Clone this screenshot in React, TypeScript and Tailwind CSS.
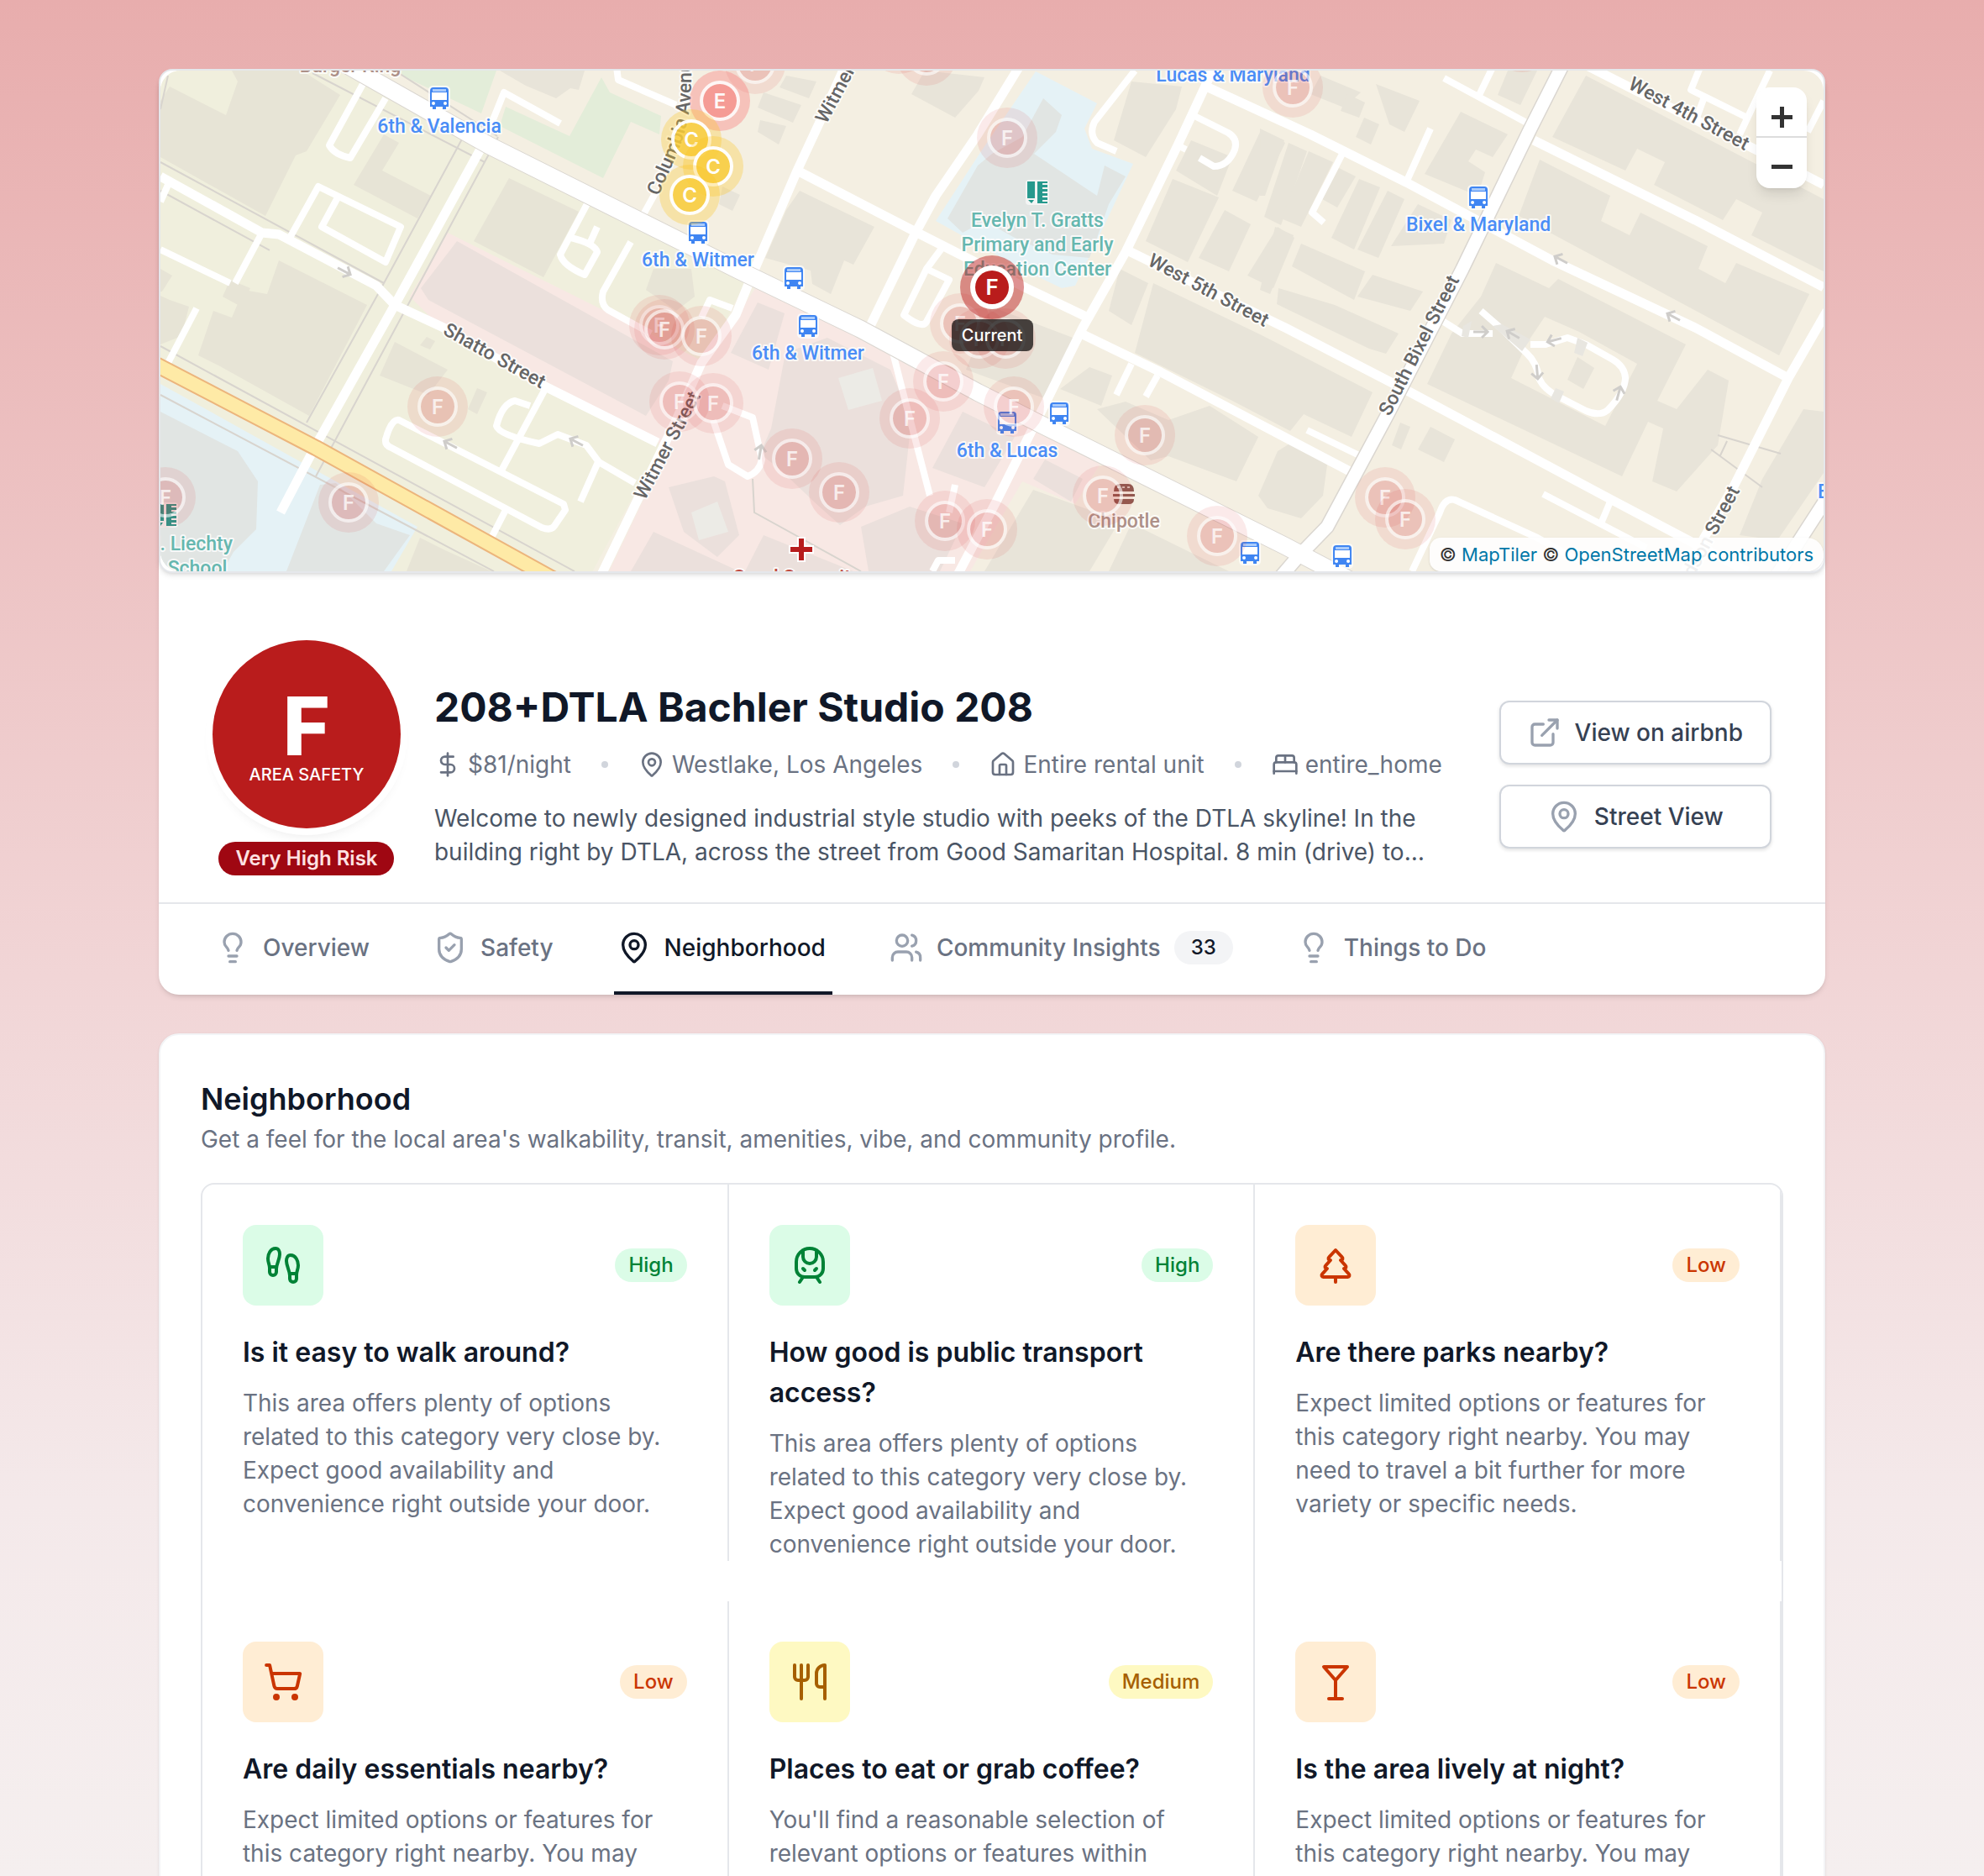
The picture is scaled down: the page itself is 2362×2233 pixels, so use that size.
import React from "react";
import {
  BedDouble,
  DollarSign,
  ExternalLink,
  Footprints,
  House,
  Lightbulb,
  MapPin,
  Martini,
  ShieldCheck,
  ShoppingCart,
  TrainFront,
  TreePine,
  Users,
  Utensils,
  type LucideIcon,
} from "lucide-react";
import clsx from "clsx";

/* ---------- map data (map units) ---------- */

const leftBuildings = [
  "191,120 202,103 269,137 283,97 276,84 359,84 405,113 365,180 352,185 316,257 191,187",
  "457,160 475,170 455,203 513,233 497,260 421,220",
  "606,212 689,252 647,330 564,287",
  "332,310 437,363 368,495 262,436 236,423 254,370 276,378 290,345 318,350",
  "274,333 298,343 287,365 265,353",
  "191,352 202,357 225,365 216,400 191,410",
  "191,320 205,328 193,347 191,347",
  "470,407 533,440 510,470 452,447",
  "568,462 580,467 568,493 557,487",
  "508,401 518,406 512,416 500,411",
  "500,640 530,655 585,680 484,680",
  "778,320 823,320 827,353 805,370 769,345",
];

const buildings = [
  "595,84 696,84 689,107 679,105 662,117 626,102",
  "936,90 972,97 963,117 928,104",
  "909,110 954,125 944,146 902,128",
  "905,143 936,150 927,172 902,157",
  "860,222 881,232 872,251 856,243",
  "952,227 1041,270 1016,315 1005,310 989,350 967,338 965,322 911,307 936,250",
  "1101,84 1172,92 1165,108 1137,140 1085,112",
  "1347,97 1407,103 1400,130 1364,187 1326,167",
  "1418,167 1467,187 1449,233 1400,203",
  "1396,213 1451,235 1414,312 1364,287",
  "1501,155 1530,170 1496,240 1467,227",
  "1534,170 1556,180 1525,268 1505,258",
  "1458,250 1489,267 1463,323 1427,307",
  "1521,270 1541,283 1516,343 1485,328",
  "1333,320 1367,337 1347,387 1320,370",
  "1373,337 1500,398 1634,467 1609,520 1552,493 1536,513 1467,477 1351,420",
  "1180,365 1285,405 1243,474 1150,440",
  "1297,437 1324,447 1311,483 1262,463",
  "1306,487 1340,478 1391,500 1440,483 1498,520 1472,573 1391,543 1370,548",
  "1521,537 1540,525 1580,553 1575,590 1549,617 1509,605 1498,590",
  "1230,583 1333,620 1297,680 1172,680",
  "1347,623 1463,680 1320,680",
  "1888,90 2171,237 2171,323 2085,280 2098,253 2067,237 2051,262 1969,220 1982,193 1949,177 1935,203 1848,163",
  "1833,190 1917,233 1906,263 1940,280 1953,253 2033,293 2022,320 2054,337 2067,313 2154,350 2118,423 1808,257",
  "1739,133 1795,160 1777,187 1757,178 1748,192 1768,205 1759,233 1696,207",
  "1795,84 1830,84 1810,125 1783,113",
  "1594,200 1614,210 1592,247 1574,237",
  "1618,213 1643,223 1612,297 1585,283",
  "1652,227 1672,237 1641,307 1616,297",
  "1558,180 1587,193 1549,270 1525,260",
  "1500,153 1529,167 1506,233 1500,233",
  "1688,243 1728,262 1719,290 1656,293",
  "1549,290 1625,323 1612,357 1538,317",
  "1634,327 1694,347 1679,370 1616,353",
  "1522,343 1589,363 1665,397 1650,421 1630,415 1520,362",
  "1518,270 1540,280 1512,350 1500,345",
  "1572,90 1620,110 1600,128 1560,112",
  "1638,100 1690,120 1672,157 1654,148",
  "1604,112 1625,122 1618,140 1596,132",
  "1624,140 1642,148 1632,172 1614,163",
  "1667,503 1679,508 1668,535 1657,530",
  "1703,508 1732,523 1719,550 1688,535",
  "1781,313 1844,343 1855,332 2007,410 1973,477 1996,487 2033,440 2058,453 2045,530 1996,585 1967,573 1980,510 1962,502 1931,567 1699,457 1728,397 1763,353",
  "2147,487 2171,490 2171,563 2116,643 2071,637 2098,570 2120,533",
];

const hospitalBuildings = [
  "544,287 801,430 796,453 769,495 510,357 501,343",
  "902,360 934,373 915,440 870,420",
  "935,420 985,402 1060,440 1085,500 1075,590 1030,603 1000,625 972,600 930,560 905,540 918,510",
  "1146,490 1208,520 1172,580 1110,557",
  "1025,627 1083,603 1146,623 1119,680 1034,680",
  "909,637 1016,680 887,680",
  "796,580 850,567 863,573 880,637 854,663 814,633",
  "778,633 880,680 751,680",
  "1244,547 1289,570 1275,597 1230,570",
];

const thinRoads = [
  "M200 220L191 240",
  "M312 277L280 337M191 297L274 337",
  "M234 367L200 432",
  "M432 100L392 173Q398 184 417 188L459 117",
  "M345 283L379 222L477 270L459 312L383 270L401 237",
  "M575 172L600 110L667 147",
  "M734 80L736 95L805 125",
  "M765 257L780 230",
  "M702 237L667 303Q670 316 696 327L711 300Q708 290 680 283M711 270L702 290",
  "M751 288L718 347Q714 362 724 369L775 397",
  "M872 367L845 357L835 378",
  "M649 463L597 560M631 483L613 477Q598 480 591 507Q594 518 642 528L664 517L698 530L713 550L756 575M712 550L691 597",
  "M671 600L475 500Q466 498 459 523Q458 530 466 533L645 628Q656 632 660 626L673 607ZM602 607L584 642",
  "M1351 84L1303 145Q1296 160 1306 170L1329 180",
  "M1420 137L1462 158Q1474 165 1470 178Q1462 198 1445 198L1428 188",
  "M1402 173L1412 178",
  "M1598 183L1562 253L1576 265",
  "M1674 217L1703 153",
  "M1719 93L1821 148M1761 113L1777 80",
  "M2024 80L2013 107L2080 140M2107 84L2071 160M2171 120L2152 157M2028 118L2020 140",
  "M1837 588L1960 652M1917 597L1906 623",
  "M1681 680L1714 610Q1720 592 1732 595L1830 640L1902 680",
  "M1556 512L1618 542",
  "M1714 380L1741 397L1777 397",
  "M1763 370L1786 390L1817 420Q1830 432 1832 450Q1838 464 1857 473L1888 489Q1904 496 1914 488Q1934 468 1935 450Q1934 436 1920 428L1888 410L1866 402L1840 410H1822",
  "M1123 293L1103 320L1130 333L1103 383Q1098 392 1076 375L1103 320",
  "M1063 420L1074 463L1107 590M1137 577L1130 610",
  "M1110 680L1117 667H1137",
  "M849 500L867 553L890 567Q904 562 907 547L896 497L860 483",
  "M1329 470L1347 433M1364 472L1378 447",
];

const streets = [
  "M191 210L312 277L332 279L448 340L470 363L528 390L649 460L783 527",
  "M575 172L470 363L376 530L334 610",
  "M713 690L805 500L835 432L876 375L893 333L949 203L976 145L1010 70",
  "M949 203L1092 277L1222 343L1293 377",
  "M1342 298L1530 390L1679 467L1915 593L2080 680",
  "M1289 398L1382 443L1500 505L1609 562",
  "M1213 80L1164 160L1114 233L1090 277L1034 392",
  "M1450 70L1402 173L1340 300L1289 390L1248 473L1186 597L1137 690",
  "M1436 103L1560 160L1674 217L1848 310L2018 390L2129 450",
  "M1826 167L2018 262L2171 342",
  "M1885 76L1946 107L2094 180L2171 220",
  "M2175 370L2129 450L2065 577L2000 690",
];

const boundaries = [
  "M372 87L577 193M553 160L450 350L365 503M593 163L376 567",
  "M191 193L457 337M191 227L321 298",
  "M191 412L684 680M191 470L588 680",
  "M896 570L898 610L1025 680M470 84L592 162",
  "M2045 518L2120 540M2037 535L2098 580M2056 525L2048 542",
  "M191 130L200 90",
];

const arrows: [number, number, number][] = [
  [410, 323, 28],
  [536, 529, 208],
  [686, 526, 208],
  [905, 538, -80],
  [1858, 309, 208],
  [1992, 377, 208],
  [1763, 395, 0],
  [1801, 398, 210],
  [1850, 405, 165],
  [1830, 443, 85],
  [1927, 468, -75],
];

const buses: [number, number][] = [
  [523, 117],
  [831, 277],
  [945, 331],
  [962, 388],
  [1199, 503],
  [1261, 492],
  [1488, 658],
  [1760, 235],
  [1598, 662],
];

const stops: [number, number, string][] = [
  [523, 158, "6th & Valencia"],
  [831, 317, "6th & Witmer"],
  [962, 428, "6th & Witmer"],
  [1199, 544, "6th & Lucas"],
  [1468, 97, "Lucas & Maryland"],
  [1760, 275, "Bixel & Maryland"],
];

const streetNames: [number, number, number, string][] = [
  [589, 423, 29, "Shatto Street"],
  [1439, 345, 28, "West 5th Street"],
  [2011, 135, 28, "West 4th Street"],
  [1689, 411, -63, "South Bixel Street"],
  [794, 530, -62, "Witmer Street"],
  [1010, 82, -62, "Witmer Street"],
  [2030, 645, -62, "Hudson Street"],
];

const fMarkers: [number, number][] = [
  [899, 76],
  [1103, 66],
  [1070, 52],
  [1199, 164],
  [1539, 104],
  [1812, 50],
  [785, 387],
  [791, 392],
  [835, 400],
  [809, 478],
  [849, 480],
  [521, 484],
  [415, 598],
  [197, 592],
  [1143, 385],
  [1166, 403],
  [1197, 403],
  [1123, 454],
  [1083, 498],
  [1207, 484],
  [943, 546],
  [999, 586],
  [1125, 620],
  [1175, 630],
  [1363, 518],
  [1313, 590],
  [1449, 638],
  [1649, 592],
  [1673, 618],
];

const cMarkers: [number, number][] = [
  [823, 166],
  [849, 198],
  [821, 232],
];

/* ---------- map drawing ---------- */

const BusIcon = ({ x, y }: { x: number; y: number }) => (
  <g transform={`translate(${x} ${y})`}>
    <rect x="-13" y="-15" width="26" height="30" rx="5" fill="#fff" opacity="0.7" />
    <path d="M-11 -9Q-11 -13 -7 -13H7Q11 -13 11 -9V10H8V13H4V10H-4V13H-8V10H-11Z" fill="#3f85f2" />
    <rect x="-9" y="-7" width="18" height="9" fill="#fff" />
    <rect x="-8" y="-11" width="16" height="3" fill="#a9cbfb" />
    <circle cx="-7" cy="6" r="2" fill="#fff" />
    <circle cx="7" cy="6" r="2" fill="#fff" />
  </g>
);

const SchoolIcon = ({ x, y }: { x: number; y: number }) => (
  <g transform={`translate(${x} ${y})`} fill="#26998d">
    <rect x="-14" y="-15" width="28" height="30" rx="4" fill="#fff" opacity="0.6" />
    <path d="M-12 -13H-3V7H-12ZM-11 9H-4L-7 13Z" />
    <path d="M0 -13H12V-11H6V-9H12V-6H6V-4H12V-1H6V1H12V4H6V6H12V9H6V11H12V13H0Z" />
  </g>
);

const FMarker = ({ x, y }: { x: number; y: number }) => (
  <g transform={`translate(${x} ${y})`}>
    <circle r="36" fill="#dc3c3c" opacity="0.11" />
    <circle r="20" fill="#c81e1e" opacity="0.13" />
    <circle r="22" fill="none" stroke="#fff" strokeWidth="4" opacity="0.6" />
    <text y="9" textAnchor="middle" className="fill-white text-[24px] font-semibold" opacity="0.75">
      F
    </text>
  </g>
);

const NeighborhoodMap: React.FC = () => (
  <svg
    viewBox="191 84 1980 596"
    preserveAspectRatio="xMidYMid slice"
    className="block h-full w-full rounded-3xl font-[Inter,sans-serif]"
    role="img"
    aria-label="Map of listings near the current one"
  >
    <rect x="191" y="84" width="1980" height="596" fill="#f4efe2" />
    <path d="M191 84H400L582 173L890 330L835 440L700 690H191Z" fill="#f0efdd" />
    <path d="M466 84H591L573 135ZM716 92L726 110L787 138L785 160L751 145L718 212L595 150L602 127L678 162Z" fill="#e3edd9" />
    <path d="M533 277L488 353L520 385L783 525L790 545L725 680H1155L1217 573L1280 600L1310 552L1239 510L1025 400L900 342L840 432L760 390Z" fill="#f8e8e4" />
    <path d="M1233 85L1306 123L1291 153L1300 177L1349 195L1320 257L1280 340L1264 343L1222 323L1114 263L1168 180Z" fill="#e5f2f6" />
    <path d="M191 457L497 627L466 680H191Z" fill="#e5f2f6" />
    <path
      d="M1242 117L1264 137L1257 157L1231 183L1306 233L1315 197L1340 210L1320 243L1306 283L1297 307L1253 303L1208 283L1172 263L1146 277L1128 260L1164 197L1181 183L1217 163ZM191 490L283 537L307 573L305 630L278 657L265 680H191ZM381 577L400 575L448 623L488 637L457 680H341Z"
      fill="#e1e5e3"
    />
    <g fill="#e7e4d6">
      {leftBuildings.map((points) => (
        <polygon key={points} points={points} />
      ))}
    </g>
    <g fill="#e8e4d9">
      {buildings.map((points) => (
        <polygon key={points} points={points} />
      ))}
    </g>
    <g fill="#ebe0dc">
      {hospitalBuildings.map((points) => (
        <polygon key={points} points={points} />
      ))}
    </g>
    <polygon points="1839,377 1880,395 1949,433 1911,507 1799,450 1818,408" fill="#f4efe2" />
    <polygon points="1878,425 1898,438 1885,463 1866,452" fill="#e8e4d9" />
    <path d="M998 450L1039 438L1050 477L1010 488ZM823 610L854 597L867 633L832 643Z" fill="#ecebe6" />

    <g fill="none" stroke="#d8d4ce" strokeWidth="2">
      {boundaries.map((d) => (
        <path key={d} d={d} />
      ))}
    </g>

    <g fill="none" stroke="#fff" strokeLinejoin="round">
      <g strokeWidth="8">
        {thinRoads.map((d) => (
          <path key={d} d={d} />
        ))}
      </g>
      <g strokeWidth="11">
        {streets.map((d) => (
          <path key={d} d={d} />
        ))}
      </g>
      <g stroke="#dad6d0">
        <path d="M400 70L582 173L880 322L1025 392L1164 467L1239 505L1530 650L1610 692" strokeWidth="22" />
        <path d="M1864 70L1821 155L1741 320L1652 493L1580 627L1545 663L1520 692M2180 585L2112 690" strokeWidth="18" />
      </g>
      <path d="M400 70L582 173L880 322L1025 392L1164 467L1239 505L1530 650L1610 692" strokeWidth="20" />
      <path d="M1864 70L1821 155L1741 320L1652 493L1580 627L1545 663L1520 692M2180 585L2112 690" strokeWidth="15" />
      <path d="M180 431L376 533L660 690" stroke="#ecb57c" strokeWidth="20" />
      <path d="M180 431L376 533L660 690" stroke="#feeaa6" strokeWidth="16" />
    </g>
    <path d="M1777 388L1788 386L1822 404L1812 418ZM1742 388L1752 382L1748 402L1740 400ZM1878 402L1890 408L1884 424L1874 420ZM1852 462L1862 466L1856 480L1846 474Z" fill="#e8e6e0" />

    <g fill="none" stroke="#cfcdca" strokeWidth="3">
      {arrows.map(([x, y, angle]) => (
        <path key={`${x}-${y}`} d="M-9 0H8M1 -7L8 0L1 7" transform={`translate(${x} ${y}) rotate(${angle})`} />
      ))}
    </g>

    <g
      className="font-[Roboto,sans-serif] text-[23px] font-medium"
      stroke="#fff"
      strokeOpacity="0.75"
      strokeWidth="4"
      strokeLinejoin="round"
      paintOrder="stroke"
      textAnchor="middle"
    >
      <g fill="#666">
        {streetNames.map(([x, y, angle, name]) => (
          <text key={`${name}-${x}`} transform={`translate(${x} ${y}) rotate(${angle})`} y="8">
            {name}
          </text>
        ))}
        <path id="columbia" d="M784 234C797 202 811 177 817 150S824 110 823 30" fill="none" stroke="none" />
        <text textAnchor="start">
          <textPath href="#columbia">Columbia Avenue</textPath>
        </text>
      </g>
      <g fill="#4a8df6">
        {stops.map(([x, y, name]) => (
          <text key={`${name}-${x}`} x={x} y={y}>
            {name}
          </text>
        ))}
        <text x="2164" y="593" textAnchor="start">
          Beaudry
        </text>
      </g>
      <g fill="#66b7af">
        <text x="1235" y="270">Evelyn T. Gratts</text>
        <text x="1235" y="299">Primary and Early</text>
        <text x="1235" y="328">Education Center</text>
        <text x="277" y="655" textAnchor="end">H. Liechty</text>
        <text x="235" y="684">School</text>
      </g>
      <g fill="#ad9088">
        <text x="1338" y="628">Chipotle</text>
        <text x="417" y="86">Burger King</text>
      </g>
      <text x="955" y="695" fill="#c04a40">Good Samaritan</text>
    </g>

    {buses.map(([x, y]) => (
      <BusIcon key={`${x}-${y}`} x={x} y={y} />
    ))}
    <SchoolIcon x={1235} y={229} />
    <SchoolIcon x={198} y={613} />
    <path d="M951 641H957V651H967V657H957V667H951V657H941V651H951Z" fill="#b71c1c" stroke="#fff" strokeWidth="4" paintOrder="stroke" />
    <g fill="#8d5a50">
      <path d="M1326 585Q1326 576 1333 576H1343Q1350 576 1350 585ZM1325 588H1351V591H1325ZM1326 594H1350Q1350 600 1344 600H1332Q1326 600 1326 594Z" />
      <path d="M1330 580H1346" stroke="#d9c0b8" strokeWidth="2" strokeDasharray="3 3" />
    </g>

    {fMarkers.map(([x, y]) => (
      <FMarker key={`${x}-${y}`} x={x} y={y} />
    ))}
    <g transform="translate(857 120)">
      <circle r="36" fill="#f87171" opacity="0.35" />
      <circle r="20" fill="#f47c76" opacity="0.55" />
      <circle r="22" fill="none" stroke="#fff" strokeWidth="4" opacity="0.85" />
      <text y="9" textAnchor="middle" className="fill-white text-[24px] font-semibold" opacity="0.95">
        E
      </text>
    </g>
    {cMarkers.map(([x, y]) => (
      <g key={`${x}-${y}`} transform={`translate(${x} ${y})`}>
        <circle r="36" fill="#fbc21e" opacity="0.3" />
        <circle r="20" fill="#f9cc38" opacity="0.8" />
        <circle r="22" fill="none" stroke="#fff" strokeWidth="4" opacity="0.95" />
        <text y="9" textAnchor="middle" className="fill-white text-[24px] font-semibold">
          C
        </text>
      </g>
    ))}

    <g transform="translate(1181 342)">
      <circle r="38" fill="#b91c1c" opacity="0.48" />
      <circle r="26" fill="#fff" />
      <circle r="20" fill="#b91c1c" />
      <text y="9" textAnchor="middle" className="fill-white text-[26px] font-semibold">
        F
      </text>
      <rect x="-48" y="38" width="97" height="38" rx="8" fill="#000" opacity="0.7" />
      <text y="64" textAnchor="middle" className="fill-white text-[20px] font-medium">
        Current
      </text>
    </g>
  </svg>
);

const MapPanel: React.FC = () => (
  <div className="relative h-[600px] overflow-hidden rounded-2xl border-2 border-gray-200 bg-white shadow-md">
    <NeighborhoodMap />
    <div className="absolute top-5 right-5 flex w-[60px] flex-col overflow-hidden rounded-2xl bg-white shadow-lg">
      <button type="button" aria-label="Zoom in" className="flex h-[60px] items-center justify-center border-b-2 border-[#dddddd] pt-3">
        <svg viewBox="0 0 25 25" className="size-[25px]" fill="#333">
          <path d="M10 0H15V10H25V15H15V25H10V15H0V10H10Z" />
        </svg>
      </button>
      <button type="button" aria-label="Zoom out" className="flex h-[60px] items-center justify-center pt-2">
        <svg viewBox="0 0 25 25" className="size-[25px]" fill="#333">
          <path d="M0 10H25V15H0Z" />
        </svg>
      </button>
    </div>
    <div className="absolute right-0 bottom-0 rounded-l-2xl rounded-r-3xl bg-white/90 px-3 py-1 text-[22px] leading-8 text-[#333] shadow-sm">
      ©{" "}
      <a href="#maptiler" className="text-[#0078a8]">
        MapTiler
      </a>{" "}
      ©{" "}
      <a href="#osm" className="text-[#0078a8]">
        OpenStreetMap contributors
      </a>
    </div>
  </div>
);

/* ---------- listing header ---------- */

const meta: { icon: LucideIcon; label: string }[] = [
  { icon: DollarSign, label: "$81/night" },
  { icon: MapPin, label: "Westlake, Los Angeles" },
  { icon: House, label: "Entire rental unit" },
  { icon: BedDouble, label: "entire_home" },
];

const actionClass =
  "flex items-center justify-center gap-4 rounded-xl border-2 border-gray-300 bg-white px-8 py-4 text-[28px] leading-10 font-medium text-gray-700 shadow-[0_2px_4px_rgba(0,0,0,0.12)]";

const ListingHeader: React.FC = () => (
  <div className="flex gap-10 px-16 pt-20 pb-8">
    <div className="flex shrink-0 flex-col items-center gap-4">
      <div className="flex size-56 flex-col items-center justify-center rounded-full bg-[#b91c1c] text-white shadow-lg ring-8 ring-white">
        <span className="text-8xl leading-none font-extrabold">F</span>
        <span className="text-[20px] leading-5 font-medium">AREA SAFETY</span>
      </div>
      <span className="rounded-full bg-[#9f0712] px-5 py-1 text-2xl font-semibold text-[#ffe2e2]">
        Very High Risk
      </span>
    </div>

    <div className="flex min-w-0 flex-1 flex-col justify-center pt-10">
      <h1 className="text-5xl leading-16 font-bold text-gray-900">208+DTLA Bachler Studio 208</h1>
      <ul className="mt-4 flex items-center text-[28px] leading-10 text-gray-500">
        {meta.map(({ icon: Icon, label }, index) => (
          <li key={label} className="flex items-center">
            {index > 0 && <span className="mx-9 size-2 rounded-full bg-gray-300" />}
            <Icon size={32} className="mr-2" />
            {label}
          </li>
        ))}
      </ul>
      <p className="mt-6 line-clamp-2 max-w-[1200px] text-[28px] leading-10 text-gray-600">
        Welcome to newly designed industrial style studio with peeks of the DTLA skyline! In the
        building right by DTLA, across the street from Good Samaritan Hospital. 8 min (drive) to
        Crypto.com Arena and the LA Convention Center.
      </p>
    </div>

    <div className="flex shrink-0 flex-col justify-center gap-6 pt-10">
      <a href="#airbnb" className={actionClass}>
        <ExternalLink size={40} className="text-gray-400" />
        View on airbnb
      </a>
      <button type="button" className={actionClass}>
        <MapPin size={40} className="text-gray-400" />
        Street View
      </button>
    </div>
  </div>
);

const tabs: { icon: LucideIcon; label: string; count?: number; active?: boolean }[] = [
  { icon: Lightbulb, label: "Overview" },
  { icon: ShieldCheck, label: "Safety" },
  { icon: MapPin, label: "Neighborhood", active: true },
  { icon: Users, label: "Community Insights", count: 33 },
  { icon: Lightbulb, label: "Things to Do" },
];

const Tabs: React.FC = () => (
  <nav className="flex gap-16 border-t-2 border-gray-200 px-16" aria-label="Listing sections">
    {tabs.map(({ icon: Icon, label, count, active }) => (
      <a
        key={label}
        href="#section"
        aria-current={active ? "page" : undefined}
        className={clsx(
          "flex items-center border-b-4 px-2 py-8 text-[28px] leading-10 font-medium",
          active ? "border-gray-900 text-gray-900" : "border-transparent text-gray-500"
        )}
      >
        <Icon size={40} className={clsx("mr-4 -ml-1", active ? "text-gray-900" : "text-gray-400")} />
        {label}
        {count && (
          <span className="ml-4 rounded-full bg-gray-100 px-5 py-1 text-2xl font-medium text-gray-900">
            {count}
          </span>
        )}
      </a>
    ))}
  </nav>
);

/* ---------- neighborhood grid ---------- */

type Level = "High" | "Medium" | "Low";

const levelClass: Record<Level, string> = {
  High: "bg-green-100 text-green-700",
  Medium: "bg-yellow-100 text-yellow-700",
  Low: "bg-orange-100 text-orange-700",
};

const levelText: Record<Level, string> = {
  High: "This area offers plenty of options related to this category very close by. Expect good availability and convenience right outside your door.",
  Medium:
    "You'll find a reasonable selection of relevant options or features within walking distance. Some might require a slightly longer trip.",
  Low: "Expect limited options or features for this category right nearby. You may need to travel a bit further for more variety or specific needs.",
};

const categories: { icon: LucideIcon; title: string; level: Level }[] = [
  { icon: Footprints, title: "Is it easy to walk around?", level: "High" },
  { icon: TrainFront, title: "How good is public transport access?", level: "High" },
  { icon: TreePine, title: "Are there parks nearby?", level: "Low" },
  { icon: ShoppingCart, title: "Are daily essentials nearby?", level: "Low" },
  { icon: Utensils, title: "Places to eat or grab coffee?", level: "Medium" },
  { icon: Martini, title: "Is the area lively at night?", level: "Low" },
];

const NeighborhoodSection: React.FC = () => (
  <section className="mt-[46px] rounded-3xl border-2 border-gray-100 bg-white p-12 shadow-sm">
    <h2 className="text-4xl leading-14 font-semibold text-gray-900">Neighborhood</h2>
    <p className="text-[28px] leading-10 text-gray-500">
      Get a feel for the local area's walkability, transit, amenities, vibe, and community profile.
    </p>
    <div className="mt-8 grid grid-cols-3 overflow-hidden rounded-2xl border-2 border-gray-200">
      {categories.map(({ icon: Icon, title, level }, index) => (
        <article
          key={title}
          className={clsx("border-r-2 border-gray-200 px-12 pt-12", index % 3 === 1 ? "pb-12" : "mb-12")}
        >
          <div className="flex items-center justify-between">
            <span className={clsx("rounded-2xl p-6", levelClass[level])}>
              <Icon size={48} />
            </span>
            <span className={clsx("rounded-full px-4 py-1 text-2xl font-medium", levelClass[level])}>
              {level}
            </span>
          </div>
          <h3 className="mt-8 text-[32px] leading-12 font-semibold text-gray-900">{title}</h3>
          <p className="mt-4 text-[28px] leading-10 text-gray-500">{levelText[level]}</p>
        </article>
      ))}
    </div>
  </section>
);

const App: React.FC = () => (
  <main className="h-screen overflow-hidden bg-[linear-gradient(to_bottom,#e8adad_0%,#f1d5d6_52%,#f4e9ea_80%,#f5efef_100%)] font-[Inter,sans-serif]">
    <div className="mx-auto w-[84%] pt-[82px]">
      <section className="rounded-3xl bg-white shadow-md">
        <MapPanel />
        <ListingHeader />
        <Tabs />
      </section>
      <NeighborhoodSection />
    </div>
  </main>
);

export default App;
